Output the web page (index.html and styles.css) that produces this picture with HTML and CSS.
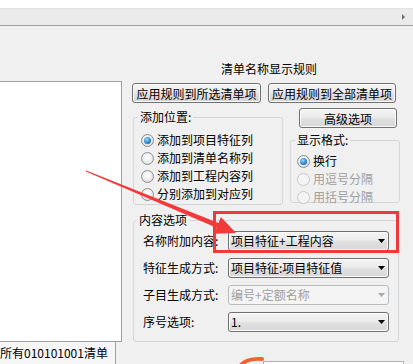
FILE: index.html
```html
<!DOCTYPE html>
<html>
<head>
<meta charset="utf-8">
<link rel="stylesheet" href="styles.css">
</head>
<body>
<div class="top-strip"></div>
<div class="toolbar"><span class="scroll-arrow"></span></div>
<div class="main">
  <div class="left-col">
    <div class="listbox"></div>
    <div class="tab">所有010101001清单</div>
  </div>
  <div class="right-col">
    <div class="title">清单名称显示规则</div>
    <div class="btn-row">
      <button class="btn btn-apply1">应用规则到所选清单项</button>
      <button class="btn btn-apply2">应用规则到全部清单项</button>
    </div>
    <div class="groups-row">
      <fieldset class="group group-pos">
        <legend>添加位置:</legend>
        <div class="group-body">
          <div class="radio-row"><span class="radio checked"></span>添加到项目特征列</div>
          <div class="radio-row"><span class="radio"></span>添加到清单名称列</div>
          <div class="radio-row"><span class="radio"></span>添加到工程内容列</div>
          <div class="radio-row"><span class="radio"></span>分别添加到对应列</div>
        </div>
      </fieldset>
      <div class="side-col">
        <button class="btn btn-adv">高级选项</button>
        <fieldset class="group group-fmt">
          <legend>显示格式:</legend>
          <div class="group-body">
            <div class="radio-row"><span class="radio checked"></span>换行</div>
            <div class="radio-row disabled"><span class="radio"></span>用逗号分隔</div>
            <div class="radio-row disabled"><span class="radio"></span>用括号分隔</div>
          </div>
        </fieldset>
      </div>
    </div>
    <fieldset class="group group-content">
      <legend>内容选项</legend>
      <div class="group-body">
        <div class="field-row">
          <span class="field-label">名称附加内容:</span>
          <div class="combo"><span>项目特征+工程内容</span><svg class="drop" width="7" height="4" viewBox="0 0 7 4"><polygon points="0,0 7,0 3.5,4"/></svg></div>
        </div>
        <div class="field-row">
          <span class="field-label">特征生成方式:</span>
          <div class="combo"><span>项目特征:项目特征值</span><svg class="drop" width="7" height="4" viewBox="0 0 7 4"><polygon points="0,0 7,0 3.5,4"/></svg></div>
        </div>
        <div class="field-row">
          <span class="field-label">子目生成方式:</span>
          <div class="combo disabled"><span>编号+定额名称</span><svg class="drop" width="7" height="4" viewBox="0 0 7 4"><polygon points="0,0 7,0 3.5,4"/></svg></div>
        </div>
        <div class="field-row">
          <span class="field-label">序号选项:</span>
          <div class="combo"><span>1.</span><svg class="drop" width="7" height="4" viewBox="0 0 7 4"><polygon points="0,0 7,0 3.5,4"/></svg></div>
        </div>
      </div>
    </fieldset>
    <div class="bottom-box"></div>
  </div>
</div>
<div class="highlight"></div>
<svg class="annot" width="413" height="364" viewBox="0 0 413 364">
  <polygon class="arrow" points="86.2,170.4 218.5,223.1 220.9,217.1 236,233 214.1,233.7 216.5,227.7 85.8,171.6"/>
  <path class="orange" d="M241 365 Q247 358 262 359"/>
</svg>
</body>
</html>
```

FILE: styles.css
```css
* {
  box-sizing: border-box;
}

html,
body {
  margin: 0;
  padding: 0;
  width: 413px;
  height: 364px;
  overflow: hidden;
}

body {
  position: relative;
  background: #f0f0f0;
  font-family: "Noto Sans CJK SC", "Noto Sans", sans-serif;
  font-size: 12px;
  line-height: 16px;
  color: #000;
}

.top-strip {
  height: 8px;
  background: #fff;
}

.toolbar {
  height: 18px;
  background: #ebebeb;
  border-top: 1px solid #e2e2e2;
  border-bottom: 1px solid #a0a0a0;
  display: flex;
  justify-content: flex-end;
  align-items: center;
  padding-right: 8px;
}

.scroll-arrow {
  width: 0;
  height: 0;
  border-top: 3px solid transparent;
  border-bottom: 3px solid transparent;
  border-left: 3px solid #707070;
}

.main {
  display: flex;
}

.left-col {
  width: 123px;
  flex: none;
  padding-top: 55px;
}

.listbox {
  width: 122px;
  height: 261px;
  background: #fff;
  border-top: 1px solid #a0a0a0;
  border-right: 1px solid #a0a0a0;
  border-bottom: 1px solid #a0a0a0;
}

.tab {
  width: 116px;
  height: 22px;
  line-height: 22px;
  background: #f6f6f6;
  border-right: 1px solid #a0a0a0;
  padding-left: 0;
  white-space: nowrap;
  overflow: hidden;
}

.right-col {
  flex: 1;
  padding-left: 9px;
}

.title {
  margin-top: 35px;
  padding-left: 89px;
  line-height: 16px;
}

.btn-row {
  display: flex;
  gap: 7px;
  margin-top: 6px;
}

.btn {
  height: 20px;
  margin: 0;
  padding: 0;
  border: 1px solid #707070;
  border-radius: 3px;
  background: linear-gradient(#f4f4f4, #ececec 45%, #e0e0e0 55%, #d6d6d6);
  box-shadow: inset 0 0 0 1px #fbfbfb;
  font: inherit;
  line-height: 17px;
  color: #000;
  text-align: center;
}

.btn-apply1 {
  width: 129px;
}

.btn-apply2 {
  width: 128px;
}

.groups-row {
  display: flex;
  align-items: flex-start;
  margin-top: 5px;
}

.group {
  margin: 0;
  padding: 0;
  min-width: 0;
  border: 1px solid #d2d6d8;
  border-radius: 3px;
}

.group legend {
  margin-left: 4px;
  padding: 0 2px;
  line-height: 16px;
}

.group-pos {
  width: 150px;
  margin-top: 1px;
  margin-left: 1px;
}

.group-pos .group-body {
  padding: 6px 0 1px;
}

.group-pos .radio {
  margin: 0 3px 0 7px;
}

.side-col {
  width: 110px;
  margin-left: 7px;
}

.btn-adv {
  display: block;
  width: 98px;
  margin-left: 9px;
}

.group-fmt {
  width: 110px;
  margin-top: 4px;
}

.group-fmt .group-body {
  padding: 4px 0 0;
}

.group-fmt .radio-row:last-child {
  margin-bottom: -4px;
}

.group-fmt .radio {
  margin: 0 3px 0 6px;
}

.radio-row {
  display: flex;
  align-items: center;
  height: 18px;
  white-space: nowrap;
}

.radio-row.disabled {
  color: #a0a0a0;
}

.radio {
  width: 13px;
  height: 13px;
  flex: none;
  border-radius: 50%;
  border: 1px solid #8e8f8f;
  background: radial-gradient(circle at 50% 40%, #ffffff 0, #f2f2f2 40%, #cfcfcf 100%);
  display: flex;
  align-items: center;
  justify-content: center;
}

.radio.checked::after {
  content: "";
  width: 7px;
  height: 7px;
  border-radius: 50%;
  background: radial-gradient(circle at 40% 35%, #9edcff 0, #2f8fd6 50%, #0b4d86 100%);
}

.radio-row.disabled .radio {
  border-color: #c9c9c9;
  background: #f4f4f4;
}

.group-content {
  width: 266px;
  margin-top: 7px;
  margin-left: 1px;
}

.group-content legend {
  margin-left: 3px;
}

.group-content .group-body {
  padding: 3px 0 9px 9px;
  display: flex;
  flex-direction: column;
  gap: 7px;
}

.field-row {
  display: flex;
  align-items: center;
  height: 20px;
}

.field-label {
  width: 85px;
  flex: none;
  white-space: nowrap;
}

.combo {
  width: 161px;
  height: 20px;
  border: 1px solid #707070;
  border-radius: 3px;
  background: linear-gradient(#f4f4f4, #ececec 45%, #e0e0e0 55%, #d8d8d8);
  box-shadow: inset 0 0 0 1px #fbfbfb;
  display: flex;
  align-items: center;
  justify-content: space-between;
  padding: 0 3px 0 2px;
  white-space: nowrap;
}

.combo .drop {
  fill: #000;
  flex: none;
}

.combo.disabled {
  border-color: #b9bcbe;
  background: #f4f4f4;
  box-shadow: none;
  color: #a0a0a0;
}

.combo.disabled .drop {
  fill: #a8a8a8;
}

.bottom-box {
  width: 141px;
  height: 20px;
  margin-top: 19px;
  margin-left: 131px;
  background: #fff;
  border: 1px solid #b0b0b0;
}

.highlight {
  position: absolute;
  left: 213px;
  top: 211px;
  width: 186px;
  height: 42px;
  border: 3px solid #f03a3a;
}

.annot {
  position: absolute;
  left: 0;
  top: 0;
  pointer-events: none;
}

.arrow {
  fill: #f23a3a;
}

.orange {
  fill: none;
  stroke: #f0642c;
  stroke-width: 4;
  stroke-linecap: round;
}
```
